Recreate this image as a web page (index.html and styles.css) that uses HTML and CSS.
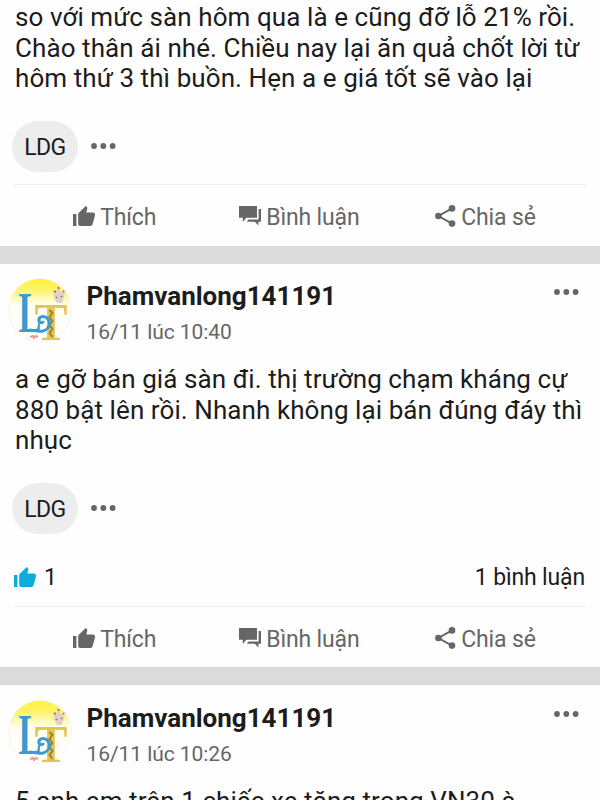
FILE: index.html
```
<!DOCTYPE html>
<html lang="vi">
<head>
<meta charset="utf-8">
<title>Bảng tin</title>
<link rel="stylesheet" href="styles.css">
</head>
<body>
<svg class="defs" aria-hidden="true">
  <defs>
    <linearGradient id="sun" x1="0" y1="0" x2="0" y2="1">
      <stop offset="0" stop-color="#fff13a"/>
      <stop offset=".18" stop-color="#fff36a"/>
      <stop offset=".42" stop-color="#fffef0"/>
      <stop offset="1" stop-color="#ffffff"/>
    </linearGradient>
    <symbol id="like" viewBox="0 0 22 20">
      <path d="M0 8h3.400v12H0zM5.200 18V8.200c0-.6.2-1.100.6-1.500L12.800 0l1.100 1.100c.4.4.5.9.4 1.400L13.300 6.500H20c1.300 0 2 1 2 2.100l-.2 1.600-2.300 8.400c-.3.9-1 1.400-1.900 1.400H7.200c-1.100 0-2-.9-2-2z"/>
    </symbol>
    <symbol id="comment" viewBox="0 0 22 20">
      <path d="M0 0h18v11.800H7.300L3.800 16v-4.200H0zM19.600 3H22v12.800h-2.600v3.800L15.800 15.800H7.800l1.800-2.200h10z"/>
    </symbol>
    <symbol id="share" viewBox="0 0 21 22">
      <path d="M17 3.400 3.400 11 17 18.600" fill="none" stroke="currentColor" stroke-width="2"/>
      <circle cx="17" cy="3.400" r="3.300"/><circle cx="3.400" cy="11" r="3.300"/><circle cx="17" cy="18.600" r="3.300"/>
    </symbol>
    <symbol id="dots" viewBox="0 0 26 6">
      <circle cx="3" cy="3" r="2.900"/><circle cx="12.300" cy="3" r="2.900"/><circle cx="21.600" cy="3" r="2.900"/>
    </symbol>
    <symbol id="avatar" viewBox="0 0 64 64">
      <circle cx="32" cy="32" r="31.500" fill="url(#sun)" stroke="#f3f0f0" stroke-width=".8"/>
      <text x="26.500" y="61.500" font-family="Liberation Serif, serif" font-weight="bold" font-size="53" textLength="33" lengthAdjust="spacingAndGlyphs" fill="#e0c750">T</text>
      <path d="M41.500 32l3 3-3 4 3 4-3 4 3 4-3 4 3 4" stroke="#9c7a35" stroke-width="1.800" fill="none"/>
      <text x="10.500" y="53.500" font-family="Liberation Serif, serif" font-weight="bold" font-size="58" textLength="23" lengthAdjust="spacingAndGlyphs" fill="#3b9bd0">L</text>
      <path d="M22 52c4 0 8 2 13 1 7-2 8-9 4-13-4-3-9-1-8 3 1 2 3 2 4 1" fill="none" stroke="#3b9bd0" stroke-width="3" stroke-linecap="round"/>
      <path d="M45 13l3 2 2-6 3 5 4-2-1 7-2 6h-5l-3-5z" fill="#e5d0c7"/>
      <path d="M46 13l2 1M50 9l1 2M55 13l1 1M48 19l1 1M53 18l1 1" stroke="#8a6b68" stroke-width="1.600"/>
      <path d="M22 59l3-1 1 2 2-2 2 1" stroke="#e79a98" stroke-width="2" fill="none"/>
    </symbol>
  </defs>
</svg>
<main class="feed">
  <article class="post first">
    <p class="body">so với mức sàn hôm qua là e cũng đỡ lỗ 21% rồi.<br>Chào thân ái nhé. Chiều nay lại ăn quả chốt lời từ<br>hôm thứ 3 thì buồn. Hẹn a e giá tốt sẽ vào lại</p>
    <div class="tags"><span class="chip">LDG</span><svg class="dots"><use href="#dots"/></svg></div>
    <footer class="actions">
      <span class="action like"><svg><use href="#like"/></svg>Thích</span>
      <span class="action comment"><svg><use href="#comment"/></svg>Bình luận</span>
      <span class="action share"><svg><use href="#share"/></svg>Chia sẻ</span>
    </footer>
  </article>
  <article class="post second">
    <header class="head">
      <svg class="avatar"><use href="#avatar"/></svg>
      <div class="who"><h2 class="name">Phamvanlong141191</h2><time class="time">16/11 lúc 10:40</time></div>
      <svg class="dots"><use href="#dots"/></svg>
    </header>
    <p class="body">a e gỡ bán giá sàn đi. thị trường chạm kháng cự<br>880 bật lên rồi. Nhanh không lại bán đúng đáy thì<br>nhục</p>
    <div class="tags"><span class="chip">LDG</span><svg class="dots"><use href="#dots"/></svg></div>
    <div class="stats"><span class="liked"><svg><use href="#like"/></svg>1</span><span class="count">1 bình luận</span></div>
    <footer class="actions">
      <span class="action like"><svg><use href="#like"/></svg>Thích</span>
      <span class="action comment"><svg><use href="#comment"/></svg>Bình luận</span>
      <span class="action share"><svg><use href="#share"/></svg>Chia sẻ</span>
    </footer>
  </article>
  <article class="post third">
    <header class="head">
      <svg class="avatar"><use href="#avatar"/></svg>
      <div class="who"><h2 class="name">Phamvanlong141191</h2><time class="time">16/11 lúc 10:26</time></div>
      <svg class="dots"><use href="#dots"/></svg>
    </header>
    <p class="body">5 anh em trên 1 chiếc xe tăng trong VN30 à</p>
  </article>
</main>
</body>
</html>
```
FILE: styles.css
```
* { box-sizing: border-box; }
body {
  margin: 0;
  background: #dbdbdb;
  color: #1c1c1c;
  font-family: Roboto, sans-serif;
}
.defs { position: absolute; width: 0; height: 0; }
svg { display: block; fill: currentColor; flex: none; }
.feed {
  display: flex;
  flex-direction: column;
  gap: 18px;
  height: 800px;
  overflow: hidden;
}
.post { background: #fefefe; flex: none; }
.first { height: 246px; padding-top: 2.4px; }
.second { height: 403px; }
.body {
  margin: 0 0 0 15px;
  font-size: 26px;
  line-height: 30.5px;
  letter-spacing: .08px;
  white-space: nowrap;
}
.tags {
  display: flex;
  align-items: center;
  gap: 13px;
  margin: 27.5px 0 0 12px;
}
.first .tags { margin-top: 27.1px; }
.chip {
  width: 66px;
  height: 51px;
  border-radius: 25.5px;
  background: #ededed;
  font-size: 23px;
  line-height: 53px;
  text-align: center;
  letter-spacing: -.6px;
}
.first .chip { line-height: 54px; }
.dots { width: 26px; height: 6px; color: #666; }
.tags .dots { margin-bottom: 1px; }
.stats {
  display: flex;
  justify-content: space-between;
  align-items: center;
  height: 42px;
  margin: 22px 15px 0 14px;
  font-size: 23px;
  letter-spacing: -.15px;
}
.liked { display: flex; align-items: center; gap: 8px; }
.liked svg { width: 22px; height: 20px; color: #09addb; }
.actions {
  display: grid;
  grid-template-columns: 166px 196px 1fr;
  align-items: center;
  height: 61px;
  margin: 8px 14px 0;
  padding: 5px 0 0 59px;
  border-top: 1px solid #efefef;
  color: #666;
  font-size: 23px;
  letter-spacing: -.14px;
}
.first .actions { margin-top: 12px; }
.action { display: flex; align-items: center; gap: 5.2px; white-space: nowrap; }
.action svg { width: 22px; height: 20px; margin-bottom: 3px; }
.action.share svg { width: 21px; height: 22px; }
.head {
  display: flex;
  align-items: flex-start;
  height: 100px;
  padding: 14px 20px 0 8px;
}
.third .head { height: 101px; padding-top: 15px; }
.avatar { width: 64px; height: 64px; }
.who { flex: 1; margin-left: 14.5px; }
.name { margin: 3px 0 0; font-size: 26px; line-height: 30px; font-weight: 700; letter-spacing: 0; }
.time { display: block; margin-top: 8px; font-size: 21px; line-height: 26px; color: #666; letter-spacing: -.07px; }
.head .dots { margin-top: 11px; }
.third .dots { margin-top: 10.5px; }
```
